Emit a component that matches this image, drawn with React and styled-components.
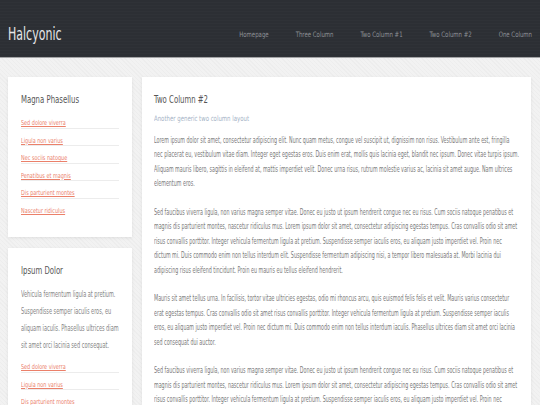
import React from 'react';
import styled, { createGlobalStyle, css } from 'styled-components';

// the reference uses a very narrow display face; squeeze a regular sans to match its widths
const squeeze = (s, origin = '0 0') => css`
  transform: scaleX(${s});
  transform-origin: ${origin};
`;

const GlobalStyle = createGlobalStyle`
  html, body {
    margin: 0;
    padding: 0;
  }
  body {
    font-family: "Liberation Sans Narrow", "DejaVu Sans Condensed", "Liberation Sans", sans-serif;
    background-color: #f2f2f2;
    background-image: repeating-linear-gradient(45deg, rgba(0,0,0,.018) 0 1px, transparent 1px 3px);
    color: #7b7b7b;
  }
`;

const Header = styled.header`
  height: 57px;
  display: flex;
  align-items: center;
  justify-content: space-between;
  padding: 0 8px;
  background: #2c2f34;
  background-image: repeating-linear-gradient(0deg, rgba(255,255,255,.015) 0 1px, transparent 1px 3px);
  border-bottom: 1px solid #a3a4a6;
`;

const Logo = styled.h1`
  margin: 0;
  padding-top: 11px;
  font-size: 17px;
  font-weight: normal;
  color: #e4e5e7;
  ${squeeze(0.72, '0 50%')}
`;

const Nav = styled.nav`
  display: flex;
  gap: 33.75px;
  padding-top: 11px;
  ${squeeze(0.8, '100% 50%')}
`;

const NavLink = styled.a`
  font-size: 7.5px;
  color: #8d9096;
  text-decoration: none;
`;

const Page = styled.div`
  display: grid;
  grid-template-columns: 124px 389px;
  gap: 10px;
  padding: 19px 9px 0 8px;
  align-items: start;
`;

const Sidebar = styled.aside`
  display: flex;
  flex-direction: column;
  gap: 11px;
`;

const Box = styled.section`
  background: #fff;
  box-shadow: 0 1px 3px rgba(0,0,0,.08);
  padding: ${p => p.$main ? '17px 12px 20px' : '17px 13px 22px'};
`;

const BoxTitle = styled.h2`
  margin: 0 0 ${p => p.$gap}px;
  font-size: 10px;
  font-weight: normal;
  color: #555;
  ${squeeze(0.77)}
`;

const Subtitle = styled.p`
  margin: 0 0 11px;
  font-size: 7.5px;
  color: #a5b3c6;
  ${squeeze(0.8)}
`;

const LinkList = styled.ul`
  list-style: none;
  margin: 0;
  padding: 0;
`;

const LinkItem = styled.li`
  height: 17.5px;
  line-height: 17.5px;
  border-top: 1px solid ${p => p.$first ? 'transparent' : '#ececec'};
  box-sizing: border-box;
`;

const RedLink = styled.a`
  display: inline-block;
  font-size: 6.8px;
  color: #eb806a;
  text-decoration: underline;
  ${squeeze(0.8, '0 50%')}
`;

const SideText = styled.p`
  width: ${100 / 0.69}%;
  margin: 0;
  font-size: 8px;
  line-height: 17px;
  color: #858585;
  ${squeeze(0.69)}
`;

const BodyText = styled.p`
  width: ${100 / 0.665}%;
  margin: 0 0 14.4px;
  font-size: 8px;
  line-height: 14.4px;
  color: #7b7b7b;
  ${squeeze(0.665)}
`;

const navItems = ['Homepage', 'Three Column', 'Two Column #1', 'Two Column #2', 'One Column'];

const firstLinks = ['Sed dolore viverra', 'Ligula non varius', 'Nec sociis natoque', 'Penatibus et magnis', 'Dis parturient montes', 'Nascetur ridiculus'];
const secondLinks = ['Sed dolore viverra', 'Ligula non varius', 'Dis parturient montes'];

const paragraphs = [
  'Lorem ipsum dolor sit amet, consectetur adipiscing elit. Nunc quam metus, congue vel suscipit ut, dignissim non risus. Vestibulum ante est, fringilla nec placerat eu, vestibulum vitae diam. Integer eget egestas eros. Duis enim erat, mollis quis lacinia eget, blandit nec ipsum. Donec vitae turpis ipsum. Aliquam mauris libero, sagittis in eleifend at, mattis imperdiet velit. Donec urna risus, rutrum molestie varius ac, lacinia sit amet augue. Nam ultrices elementum eros.',
  'Sed faucibus viverra ligula, non varius magna semper vitae. Donec eu justo ut ipsum hendrerit congue nec eu risus. Cum sociis natoque penatibus et magnis dis parturient montes, nascetur ridiculus mus. Lorem ipsum dolor sit amet, consectetur adipiscing egestas tempus. Cras convallis odio sit amet risus convallis porttitor. Integer vehicula fermentum ligula at pretium. Suspendisse semper iaculis eros, eu aliquam justo imperdiet vel. Proin nec dictum mi. Duis commodo enim non tellus interdum elit. Suspendisse fermentum adipiscing nisi, a tempor libero malesuada at. Morbi lacinia dui adipiscing risus eleifend tincidunt. Proin eu mauris eu tellus eleifend hendrerit.',
  'Mauris sit amet tellus urna. In facilisis, tortor vitae ultricies egestas, odio mi rhoncus arcu, quis euismod felis felis et velit. Mauris varius consectetur erat egestas tempus. Cras convallis odio sit amet risus convallis porttitor. Integer vehicula fermentum ligula at pretium. Suspendisse semper iaculis eros, eu aliquam justo imperdiet vel. Proin nec dictum mi. Duis commodo enim non tellus interdum iaculis. Phasellus ultrices diam sit amet orci lacinia sed consequat dui auctor.',
  'Sed faucibus viverra ligula, non varius magna semper vitae. Donec eu justo ut ipsum hendrerit congue nec eu risus. Cum sociis natoque penatibus et magnis dis parturient montes, nascetur ridiculus mus. Lorem ipsum dolor sit amet, consectetur adipiscing egestas tempus. Cras convallis odio sit amet risus convallis porttitor. Integer vehicula fermentum ligula at pretium. Suspendisse semper iaculis eros, eu aliquam justo imperdiet vel. Proin nec dictum mi. Duis commodo enim non tellus interdum elit.',
];

const Links = ({ items }) => (
  <LinkList>
    {items.map((label, i) => (
      <LinkItem key={label} $first={i === 0}>
        <RedLink href="#">{label}</RedLink>
      </LinkItem>
    ))}
  </LinkList>
);

const App = () => (
  <>
    <GlobalStyle />
    <Header>
      <Logo>Halcyonic</Logo>
      <Nav>
        {navItems.map(item => <NavLink key={item} href="#">{item}</NavLink>)}
      </Nav>
    </Header>
    <Page>
      <Sidebar>
        <Box>
          <BoxTitle $gap={5}>Magna Phasellus</BoxTitle>
          <Links items={firstLinks} />
        </Box>
        <Box>
          <BoxTitle $gap={10}>Ipsum Dolor</BoxTitle>
          <SideText>
            Vehicula fermentum ligula at pretium. Suspendisse semper iaculis eros, eu aliquam iaculis. Phasellus ultrices diam sit amet orci lacinia sed consequat.
          </SideText>
          <Links items={secondLinks} />
        </Box>
      </Sidebar>
      <Box $main>
        <BoxTitle $gap={9}>Two Column #2</BoxTitle>
        <Subtitle>Another generic two column layout</Subtitle>
        {paragraphs.map((text, i) => <BodyText key={i}>{text}</BodyText>)}
      </Box>
    </Page>
  </>
);

export default App;
